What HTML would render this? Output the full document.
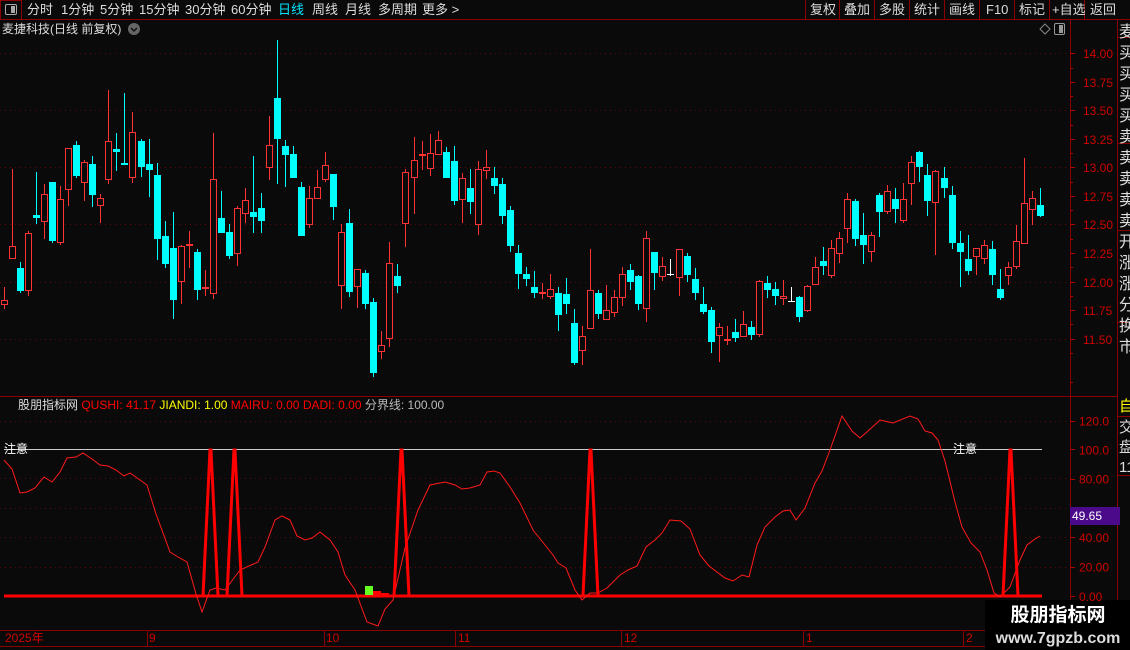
<!DOCTYPE html>
<html><head><meta charset="utf-8">
<style>
html,body{margin:0;padding:0;background:#0a0a0a;width:1130px;height:650px;overflow:hidden;font-family:"Liberation Sans","Noto Sans CJK SC",sans-serif;}
.t{position:absolute;white-space:nowrap;font-size:12px;line-height:14px}
.n{position:absolute;white-space:nowrap;font-size:13px;line-height:15px;top:2px;color:#ddd}
</style></head>
<body>
<svg id="s" width="1130" height="650" style="position:absolute;left:0;top:0" xmlns="http://www.w3.org/2000/svg" font-family="Liberation Sans, Noto Sans CJK SC, sans-serif">
<rect width="1130" height="650" fill="#0a0a0a"/>
<line x1="0" y1="19.5" x2="1130" y2="19.5" stroke="#8b0000"/>
<rect x="0.5" y="0.5" width="21" height="19" fill="none" stroke="#8b0000"/>
<rect x="5.5" y="4.5" width="11" height="10" rx="1.5" fill="none" stroke="#aaa"/>
<rect x="11" y="6" width="4" height="7" fill="#aaa"/>
<g stroke="#8b0000"><line x1="805.5" y1="0" x2="805.5" y2="19"/><line x1="839.5" y1="0" x2="839.5" y2="19"/><line x1="874.5" y1="0" x2="874.5" y2="19"/><line x1="909.5" y1="0" x2="909.5" y2="19"/><line x1="944.5" y1="0" x2="944.5" y2="19"/><line x1="979.5" y1="0" x2="979.5" y2="19"/><line x1="1014.5" y1="0" x2="1014.5" y2="19"/><line x1="1049.5" y1="0" x2="1049.5" y2="19"/><line x1="1084.5" y1="0" x2="1084.5" y2="19"/>
<line x1="1070.5" y1="20" x2="1070.5" y2="650"/><line x1="1117.5" y1="20" x2="1117.5" y2="650"/>
<line x1="0" y1="396.5" x2="1117" y2="396.5"/><line x1="0" y1="630.5" x2="1070" y2="630.5"/><line x1="0" y1="646.5" x2="1070" y2="646.5"/>
</g>
<g stroke="#8b0000"><line x1="1117" y1="37.5" x2="1130" y2="37.5"/><line x1="1117" y1="143.5" x2="1130" y2="143.5"/><line x1="1117" y1="230.5" x2="1130" y2="230.5"/><line x1="1117" y1="322.5" x2="1130" y2="322.5"/><line x1="1117" y1="416.5" x2="1130" y2="416.5"/><line x1="1117" y1="475.5" x2="1130" y2="475.5"/></g>
<circle cx="134" cy="29" r="6" fill="#666"/><path d="M131 28l3 3 3-3" stroke="#111" stroke-width="1.5" fill="none"/>
<path d="M1045 24l5 5-5 5-5-5z" fill="none" stroke="#888"/>
<rect x="1054.5" y="23.5" width="10" height="11" rx="1.5" fill="none" stroke="#999"/><rect x="1059" y="25" width="4" height="8" fill="#999"/>
<g id="grid" stroke="#5a0a0a" stroke-dasharray="1 4"></g>
<g id="c"></g>
<g id="ind"></g>
<g id="ax" stroke="#b00000"></g>
<g stroke="#8b0000"><line x1="147.5" y1="630" x2="147.5" y2="646"/><line x1="324.5" y1="630" x2="324.5" y2="646"/><line x1="455.5" y1="630" x2="455.5" y2="646"/><line x1="621.5" y1="630" x2="621.5" y2="646"/><line x1="803.5" y1="630" x2="803.5" y2="646"/><line x1="963.5" y1="630" x2="963.5" y2="646"/></g>
<text x="5" y="642" fill="#d00000" font-size="12">2025年</text>
<text x="149" y="642" fill="#d00000" font-size="12">9</text>
<text x="326" y="642" fill="#d00000" font-size="12">10</text>
<text x="458" y="642" fill="#d00000" font-size="12">11</text>
<text x="624" y="642" fill="#d00000" font-size="12">12</text>
<text x="806" y="642" fill="#d00000" font-size="12">1</text>
<text x="966" y="642" fill="#d00000" font-size="12">2</text>
<rect x="1070" y="507" width="50" height="18" fill="#4a0a8a"/>
<text x="1072" y="520" fill="#fff" font-size="12">49.65</text>
<rect x="985" y="600" width="145" height="50" fill="#000"/>
<text x="1058" y="621" fill="#fff" font-size="19" font-weight="bold" text-anchor="middle">股朋指标网</text>
<text x="1058" y="643" fill="#ddd" font-size="16" font-weight="bold" text-anchor="middle">www.7gpzb.com</text>
</svg>
<div class="n" style="left:27px">分时</div>
<div class="n" style="left:61px">1分钟</div>
<div class="n" style="left:100px">5分钟</div>
<div class="n" style="left:139px">15分钟</div>
<div class="n" style="left:185px">30分钟</div>
<div class="n" style="left:231px">60分钟</div>
<div class="n" style="left:278px;color:#00e5ff">日线</div>
<div class="n" style="left:312px">周线</div>
<div class="n" style="left:345px">月线</div>
<div class="n" style="left:378px">多周期</div>
<div class="n" style="left:422px">更多 &gt;</div>
<div class="n" style="left:810px">复权</div>
<div class="n" style="left:844px">叠加</div>
<div class="n" style="left:879px">多股</div>
<div class="n" style="left:914px">统计</div>
<div class="n" style="left:949px">画线</div>
<div class="n" style="left:986px">F10</div>
<div class="n" style="left:1019px">标记</div>
<div class="n" style="left:1052px">+自选</div>
<div class="n" style="left:1090px">返回</div>
<div class="t" style="left:2px;top:22px;color:#ddd">麦捷科技(日线 前复权)</div>
<div class="t" style="left:18px;top:398px;color:#ddd">股朋指标网 <span style="color:#f00">QUSHI: 41.17</span> <span style="color:#ff0">JIANDI: 1.00</span> <span style="color:#f00">MAIRU: 0.00</span> <span style="color:#f00">DADI: 0.00</span> <span style="color:#bbb">分界线: 100.00</span></div>
<div class="t" style="left:4px;top:442px;color:#fff">注意</div>
<div class="t" style="left:953px;top:442px;color:#fff">注意</div>
<div class="t" style="left:1119px;top:22px;color:#ddd;width:20px;white-space:normal;line-height:21px;font-size:16px;overflow:hidden;height:370px">麦买买买买卖卖卖卖卖开涨涨分换市</div>
<div class="t" style="left:1119px;top:400px;color:#ff0;font-size:15px">自</div>
<div class="t" style="left:1119px;top:418px;color:#ddd;width:20px;white-space:normal;line-height:20px;font-size:15px;overflow:hidden;height:220px">交盘1111111111</div>
<script>
var NS="http://www.w3.org/2000/svg";
function el(p,n,a){var e=document.createElementNS(NS,n);for(var k in a)e.setAttribute(k,a[k]);p.appendChild(e);return e;}
var s=document.getElementById('s');
var g=document.getElementById('grid');
[53,110,167,224,282,339].forEach(function(y){el(g,'line',{x1:0,y1:y+.5,x2:1068,y2:y+.5});});
[420.7,478,508,537,567].forEach(function(y){el(g,'line',{x1:0,y1:Math.round(y)+.5,x2:1068,y2:Math.round(y)+.5});});
var ax=document.getElementById('ax');
var pl=[["14.00",53],["13.75",82],["13.50",110],["13.25",139],["13.00",167],["12.75",196],["12.50",224],["12.25",253],["12.00",282],["11.75",310],["11.50",339]];
pl.forEach(function(p){el(ax,'line',{x1:1070,y1:p[1]+.5,x2:1075,y2:p[1]+.5});var t=el(s,'text',{x:1083,y:p[1]+5,fill:'#d00000','font-size':12});t.textContent=p[0];});
[68,96,125,153,182,210,239,267,296,324,353,382].forEach(function(y){el(ax,'line',{x1:1070,y1:y+.5,x2:1073,y2:y+.5});});
var il=[["120.0",420.7],["100.0",449.3],["80.00",478.6],["40.00",537.2],["20.00",566.5],["0.00",595.8]];
il.forEach(function(p){el(ax,'line',{x1:1070,y1:Math.round(p[1])+.5,x2:1075,y2:Math.round(p[1])+.5});var t=el(s,'text',{x:1079,y:p[1]+5,fill:'#d00000','font-size':12});t.textContent=p[0];});
var D=[[300,305,287,309,'r'],[246,259,169,259,'r'],[268,291,262,293,'c'],[233,291,231,296,'r'],[215,218,172,224,'c'],[194,222,184,239,'r'],[182,241,182,243,'c'],[199,243,186,245,'r'],[148,190,148,206,'r'],[145,176,141,178,'c'],[162,183,160,201,'r'],[164,195,156,207,'c'],[198,206,194,223,'r'],[141,180,90,184,'r'],[149,152,133,171,'c'],[163,165,93,165,'c'],[132,178,112,183,'r'],[141,167,139,177,'c'],[164,170,139,197,'c'],[175,239,163,260,'c'],[236,264,221,268,'c'],[248,300,212,319,'c'],[246,282,245,304,'r'],[244,246,231,268,'r'],[252,290,249,300,'c'],[287,289,270,296,'r'],[179,294,133,299,'r'],[218,233,191,233,'c'],[232,256,224,259,'c'],[208,254,206,266,'r'],[200,214,188,223,'r'],[212,217,156,233,'c'],[208,221,193,233,'c'],[145,168,116,180,'r'],[98,139,40,184,'c'],[146,155,140,187,'c'],[154,178,146,178,'c'],[187,236,182,236,'c'],[198,225,186,228,'r'],[187,199,170,199,'r'],[165,180,152,182,'r'],[174,207,174,220,'c'],[232,286,224,309,'r'],[223,292,209,297,'c'],[269,287,269,308,'r'],[273,304,270,309,'c'],[302,373,298,377,'c'],[345,352,331,359,'r'],[263,339,242,347,'r'],[276,286,264,293,'c'],[172,224,169,247,'r'],[160,178,137,214,'r'],[154,156,141,170,'r'],[153,169,134,176,'r'],[140,155,131,155,'r'],[152,178,147,178,'c'],[161,201,146,205,'c'],[178,200,173,223,'r'],[188,202,169,214,'c'],[169,225,161,235,'r'],[167,171,150,179,'r'],[178,186,167,194,'c'],[184,216,178,224,'c'],[210,246,206,252,'c'],[253,274,245,289,'c'],[274,279,267,286,'c'],[287,293,271,298,'c'],[292,294,283,299,'r'],[289,297,274,299,'r'],[293,315,287,331,'c'],[294,304,278,314,'c'],[323,363,309,365,'c'],[336,351,326,365,'r'],[290,329,249,329,'r'],[293,314,290,319,'c'],[310,320,285,320,'r'],[297,313,290,317,'r'],[274,298,267,306,'r'],[270,282,264,290,'c'],[276,304,275,310,'c'],[238,309,231,322,'r'],[252,273,252,290,'c'],[266,277,257,281,'r'],[274,274,259,276,'w'],[249,278,249,296,'r'],[256,275,253,282,'c'],[279,293,268,300,'c'],[304,312,287,314,'c'],[310,342,307,353,'c'],[327,336,323,362,'r'],[339,340,326,345,'r'],[332,338,319,342,'c'],[324,337,311,337,'r'],[327,335,321,340,'c'],[281,335,280,337,'r'],[283,290,276,298,'c'],[289,296,282,305,'c'],[296,299,280,305,'r'],[301,301,287,301,'w'],[297,317,296,322,'c'],[286,311,285,312,'r'],[267,285,257,285,'r'],[261,266,247,275,'c'],[248,276,240,278,'r'],[238,254,232,263,'r'],[199,229,193,243,'r'],[201,239,199,246,'c'],[235,245,213,264,'c'],[235,252,232,262,'r'],[195,212,193,237,'c'],[191,212,185,214,'r'],[199,209,188,223,'c'],[199,221,183,223,'r'],[162,184,156,205,'r'],[152,167,151,182,'c'],[175,201,164,216,'c'],[171,203,170,255,'r'],[178,188,167,198,'c'],[195,243,186,249,'c'],[243,252,231,287,'c'],[259,271,235,275,'c'],[248,257,248,275,'r'],[245,259,240,264,'r'],[249,275,241,285,'c'],[289,298,269,300,'c'],[267,276,262,285,'r'],[241,267,225,269,'r'],[203,244,158,244,'r'],[198,210,191,225,'r'],[205,216,188,217,'c']];
var cg=document.getElementById('c');
D.forEach(function(d,i){var x=Math.round(4+i*8.03);var col=d[4]=='c'?'#00ffff':(d[4]=='w'?'#ffffff':'#ff3333');
 el(cg,'line',{x1:x+.5,y1:d[2],x2:x+.5,y2:d[3],stroke:col});
 if(d[4]=='c'){el(cg,'rect',{x:x-3,y:d[0],width:7,height:Math.max(d[1]-d[0],2),fill:col});}
 else if(d[4]=='w'){el(cg,'line',{x1:x-3,y1:d[0]+.5,x2:x+4,y2:d[0]+.5,stroke:col});}
 else{if(d[1]-d[0]<3){el(cg,'rect',{x:x-3,y:d[0],width:7,height:2,fill:col});}else el(cg,'rect',{x:x-2.5,y:d[0]+.5,width:6,height:d[1]-d[0]-1,fill:'#0a0a0a',stroke:col});}
});
var ig=document.getElementById('ind');
el(ig,'line',{x1:4,y1:449.5,x2:1042,y2:449.5,stroke:'#cccccc'});
el(ig,'line',{x1:4,y1:596,x2:1042,y2:596,stroke:'#ff0000','stroke-width':3});
var P=[[4,460],[12,469],[20,493],[27,492],[35,488],[44,477],[52,482],[60,472],[67,458],[76,457],[83,453],[92,459],[100,465],[108,466],[116,470],[124,476],[130,473],[140,480],[147,485],[156,514],[170,552],[178,557],[187,562],[196,594],[202,612],[210,590],[216,588],[225,590],[240,570],[258,562],[265,547],[275,520],[282,516],[290,520],[297,536],[305,540],[312,538],[320,532],[330,540],[338,552],[345,575],[355,590],[367,622],[378,626],[385,609],[393,600],[405,548],[418,510],[430,485],[445,482],[455,485],[462,489],[470,488],[480,485],[487,472],[494,471],[500,473],[510,487],[520,503],[533,530],[545,545],[553,555],[558,563],[566,568],[575,590],[582,600],[590,593],[598,593],[607,588],[620,575],[628,570],[637,566],[646,547],[655,540],[662,533],[670,520],[681,521],[690,529],[700,555],[709,566],[725,578],[733,581],[742,575],[749,577],[757,545],[765,527],[775,517],[783,511],[790,510],[796,520],[805,508],[815,483],[822,471],[830,450],[842,416],[852,431],[860,438],[868,431],[880,420],[893,423],[910,416],[918,419],[925,431],[932,433],[938,440],[945,461],[955,502],[962,527],[971,543],[980,552],[987,570],[994,593],[1000,597],[1010,587],[1020,560],[1027,545],[1035,539],[1040,536]];
el(ig,'polyline',{points:P.map(function(p){return p.join(',')}).join(' '),fill:'none',stroke:'#ff1a1a','stroke-width':1});
[210,234,401,590,1010].forEach(function(c){el(ig,'polyline',{points:(c-7)+',596 '+c+',450 '+(c+1)+',450 '+(c+8)+',596',fill:'none',stroke:'#ff0000','stroke-width':3});});
el(ig,'rect',{x:365,y:586,width:8,height:9,fill:'#66ff22'});
el(ig,'rect',{x:373,y:591,width:8,height:4,fill:'#ff0000'});
el(ig,'rect',{x:381,y:593,width:8,height:2,fill:'#ff0000'});
</script>
</body></html>
